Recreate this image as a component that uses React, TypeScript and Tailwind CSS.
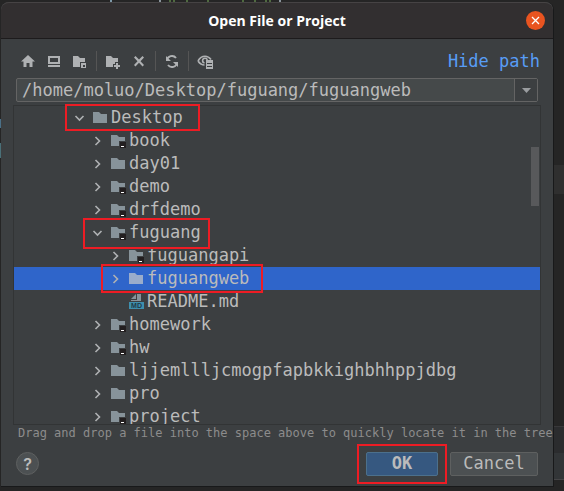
import React from "react";

type Kind = "folder" | "module" | "markdown";

interface Entry {
  name: string;
  depth: number;
  kind: Kind;
  open?: boolean;
  selected?: boolean;
  mark?: string;
}

const entries: Entry[] = [
  { name: "Desktop", depth: 0, kind: "folder", open: true, mark: "-left-[9px] -top-0.5 h-[27px] w-[135px]" },
  { name: "book", depth: 1, kind: "module" },
  { name: "day01", depth: 1, kind: "folder" },
  { name: "demo", depth: 1, kind: "module" },
  { name: "drfdemo", depth: 1, kind: "module" },
  { name: "fuguang", depth: 1, kind: "module", open: true, mark: "-left-[9px] -top-[3px] h-[31px] w-[127px]" },
  { name: "fuguangapi", depth: 2, kind: "module" },
  { name: "fuguangweb", depth: 2, kind: "folder", selected: true, mark: "-left-[9px] -top-[3px] h-[29px] w-[162px]" },
  { name: "README.md", depth: 2, kind: "markdown" },
  { name: "homework", depth: 1, kind: "module" },
  { name: "hw", depth: 1, kind: "module" },
  { name: "ljjemllljcmogpfapbkkighbhhppjdbg", depth: 1, kind: "folder" },
  { name: "pro", depth: 1, kind: "folder" },
  { name: "project", depth: 1, kind: "module" },
];

const indents = ["pl-[60px]", "pl-[78px]", "pl-[96px]"];

function Chevron({ open }: { open?: boolean }) {
  return (
    <svg className="size-3 shrink-0" viewBox="0 0 12 12" fill="none" stroke="#afb1b3" strokeWidth="1.6">
      <path d={open ? "M1.500 4l4 4 4-4" : "M3.500 2l4 4-4 4"} />
    </svg>
  );
}

function EntryIcon({ kind, selected }: { kind: Kind; selected?: boolean }) {
  if (kind === "markdown") {
    return (
      <svg className="size-4 shrink-0" viewBox="0 0 16 16">
        <path d="M7 0v5H2z" fill="#87939a" />
        <path d="M8 0h4v7H2V6h6z" fill="#87939a" />
        <path d="M0 8h15v7H0z" fill="#3e8fae" />
        <text x="7.500" y="14" textAnchor="middle" fontSize="7" fontWeight="bold" fill="#1f3a46" fontFamily="Liberation Sans, sans-serif">
          MD
        </text>
      </svg>
    );
  }
  return (
    <svg className="size-4 shrink-0" viewBox="0 0 16 16">
      <path d="M0 2h6l2 2h6v9H0z" fill={selected ? "#9aaccb" : "#87939a"} />
      {kind === "module" && (
        <>
          <path d="M8 8h8v8H8z" fill="#3c3f41" />
          <path d="M9 9h6v6H9z" fill="#231f20" />
          <path d="M10 13h3v1h-3z" fill="#ffffff" />
        </>
      )}
    </svg>
  );
}

function Row({ entry }: { entry: Entry }) {
  return (
    <li
      role="treeitem"
      aria-selected={!!entry.selected}
      className={`flex h-[23px] ${indents[entry.depth]} ${entry.selected ? "bg-[#2f65ca]" : ""}`}
    >
      <div className="relative flex items-center">
        {entry.kind === "markdown" ? <span className="w-3" /> : <Chevron open={entry.open} />}
        <span className="ml-[7px] flex items-center gap-0.5">
          <EntryIcon kind={entry.kind} selected={entry.selected} />
          <span>{entry.name}</span>
        </span>
        {entry.mark && <span className={`pointer-events-none absolute z-10 border-2 border-[#ed1c24] ${entry.mark}`} />}
      </div>
    </li>
  );
}

function Tool({ label, children }: { label: string; children: React.ReactNode }) {
  return (
    <button type="button" aria-label={label} className="flex size-4 items-center justify-center">
      <svg className="size-4" viewBox="0 0 16 16" fill="#afb1b3">
        {children}
      </svg>
    </button>
  );
}

function Divider() {
  return <span className="-mx-0.5 h-5 w-px bg-[#555555]" />;
}

function Toolbar() {
  return (
    <div className="flex h-[39px] items-center pt-1 pl-[19px]">
      <div className="flex items-center gap-[10px]">
        <Tool label="Home">
          <path d="M8 2l7 6.500h-2.500V14H9.500v-4h-3v4h-3V8.500H1z" />
        </Tool>
        <Tool label="Desktop">
          <path d="M2 3h12v8H2zM4 5v4h8V5zM2 12h12v2H2z" fillRule="evenodd" />
        </Tool>
        <Tool label="Project directory">
          <path d="M1 3h5l2 2h5v4H8v5H1z" />
          <path d="M9 10h5v5H9zM11 12v2h2v-2z" fillRule="evenodd" />
        </Tool>
        <Divider />
        <Tool label="New folder">
          <path d="M1 3h5l2 2h5v4h-3v2H8v3H1z" />
          <path d="M11 10h2v2h2v2h-2v2h-2v-2H9v-2h2z" />
        </Tool>
        <Tool label="Delete">
          <path d="M3 4.500L4.500 3 8 6.600 11.500 3 13 4.500 9.500 8.200 13 12l-1.500 1.500L8 9.800l-3.500 3.700L3 12l3.500-3.800z" />
        </Tool>
        <Divider />
        <Tool label="Refresh">
          <path d="M3 7.500a5 5 0 0 1 9-2.500M13 9.500A5 5 0 0 1 4 12" fill="none" stroke="#afb1b3" strokeWidth="1.900" />
          <path d="M2 3v5h5zM14 14V9H9z" />
        </Tool>
        <Divider />
        <Tool label="Show hidden files">
          <path d="M1 8C3 4.500 5.500 3.300 8 3.300s4.500 1.200 6 3.200M1 8c2 3 4 4 6.500 4" fill="none" stroke="#afb1b3" strokeWidth="1.600" />
          <path d="M10.300 7A2.400 2.400 0 1 0 7.500 10" fill="none" stroke="#afb1b3" strokeWidth="1.600" />
          <path d="M9 7h7v9H9zM10 10v1h5v-1zM10 13v1h5v-1z" fillRule="evenodd" />
        </Tool>
      </div>
      <a href="#path" className="mt-0.5 mr-[13px] ml-auto text-[#589df6]">
        Hide path
      </a>
    </div>
  );
}

/* Slivers of the editor window that stay visible around the dialog. */
function EditorBackdrop() {
  return (
    <div aria-hidden="true" className="absolute inset-0 bg-[#252525]">
      <span className="absolute top-[165px] right-0 h-[29px] w-3 bg-[#2f2f2f]" />
      <span className="absolute top-[426px] right-0 h-[27px] w-3 border-t border-[#38383a] bg-[#2b2c2e]" />
      <span className="absolute top-[453px] right-0 h-[27px] w-3 border-b border-[#454547] bg-[#323537]" />
      <span className="absolute top-[119px] left-0 h-[9px] w-px bg-[#4a7088]" />
      <span className="absolute top-[143px] left-0 h-[15px] w-px bg-[#4a7078]" />
      <span className="absolute top-0 left-[110px] h-0.5 w-0.5 bg-[#7d98a8]" />
      <span className="absolute top-0 left-[159px] h-0.5 w-0.5 bg-[#8a949c]" />
      <span className="absolute top-0 left-[169px] h-0.5 w-1.5 border-x-2 border-[#4f6a40]" />
      <span className="absolute top-0 left-[186px] h-0.5 w-0.5 bg-[#4f6a40]" />
      <span className="absolute top-0 left-[207px] h-0.5 w-0.5 bg-[#4f6a40]" />
      <span className="absolute top-0 left-[242px] h-0.5 w-0.5 bg-[#4f6a40]" />
      <span className="absolute top-0 left-[254px] h-0.5 w-0.5 bg-[#4f6a40]" />
      <span className="absolute top-0 left-[265px] h-0.5 w-1.5 border-x-2 border-[#4f6a40]" />
      <span className="absolute top-0 left-[279px] h-0.5 w-0.5 bg-[#8a949c]" />
    </div>
  );
}

export default function App() {
  return (
    <div className="relative min-h-screen pt-0.5 pr-[10px] pb-1 pl-px font-['DejaVu_Sans_Mono','Liberation_Mono',monospace] text-[17px] leading-[23px] text-[#bbbbbb]">
      <EditorBackdrop />
      <main className="relative rounded-t-lg border-r border-b border-[#18191a] bg-[#3c3f41]">
        <header className="relative flex h-[37px] items-center justify-center rounded-t-lg border-t border-b border-t-[#464344] border-b-[#1d1b1c] bg-[#322f30]">
          <h1 className="font-['Open_Sans','Noto_Sans',sans-serif] text-sm font-bold text-white">Open File or Project</h1>
          <button type="button" aria-label="Close" className="absolute right-2 flex size-[19px] items-center justify-center rounded-full bg-[#e95420]">
            <svg className="size-[9px]" viewBox="0 0 9 9" stroke="#ffffff" strokeWidth="1.300">
              <path d="M1 1l7 7M8 1L1 8" />
            </svg>
          </button>
        </header>

        <Toolbar />

        <div className="mx-[15px] flex h-6 rounded-xs border border-[#646464] bg-[#45494a]">
          <input
            aria-label="Path"
            className="min-w-0 flex-1 px-[5px] outline-none"
            defaultValue="/home/moluo/Desktop/fuguang/fuguangweb"
          />
          <button type="button" aria-label="Path history" className="flex w-[23px] items-center justify-center border-l border-[#646464] bg-[#3c3f41]">
            <svg className="h-[5px] w-[9px]" viewBox="0 0 9 5">
              <path d="M0 0h9L4.500 5z" fill="#9a9da0" />
            </svg>
          </button>
        </div>

        <section className="relative mx-3 mt-[3px] h-[320px] border border-[#323435]">
          <ul role="tree" aria-label="Files" className="h-full [clip-path:inset(-4px_0_0_0)]">
            {entries.map((e) => (
              <Row key={e.name} entry={e} />
            ))}
          </ul>
          <span className="absolute top-[41px] right-px h-[59px] w-2 bg-[#58595b]" />
        </section>

        <p className="overflow-hidden pl-[17px] text-xs leading-4 whitespace-nowrap text-[#8c8c8c]">
          Drag and drop a file into the space above to quickly locate it in the tree
        </p>

        <footer className="flex h-[45px] items-center px-[15px]">
          <button type="button" aria-label="Help" className="flex size-[23px] items-center justify-center rounded-full border border-[#5e6060] bg-[#4c5052] font-['Inter',sans-serif] text-base font-semibold">
            ?
          </button>
          <div className="relative ml-auto">
            <button type="button" className="flex h-6 w-[72px] items-center justify-center rounded-xs border border-[#4c708c] bg-[#365880] font-bold">
              OK
            </button>
            <span className="pointer-events-none absolute -inset-x-[9px] -inset-y-2 border-2 border-[#ed1c24]" />
          </div>
          <button type="button" className="ml-3 flex h-6 w-[88px] items-center justify-center rounded-xs border border-[#5e6060] bg-[#4c5052]">
            Cancel
          </button>
        </footer>
      </main>
    </div>
  );
}
